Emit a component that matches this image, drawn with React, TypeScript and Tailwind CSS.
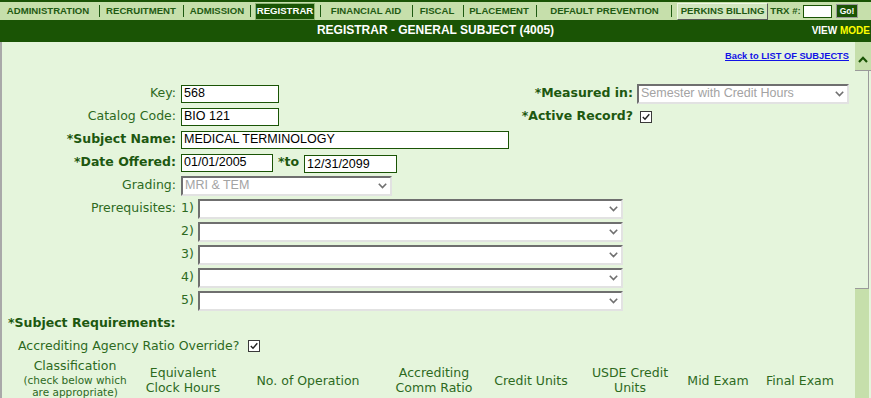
import React from "react";

function Chevron() {
  return (
    <svg width="9" height="6" viewBox="0 0 9 6" className="shrink-0">
      <path d="M0.8 0.8 L4.5 4.6 L8.2 0.8" fill="none" stroke="#707070" strokeWidth="1.6" />
    </svg>
  );
}

function Select({ w, value }: { w: string; value?: string }) {
  return (
    <div
      className={`flex h-[20px] ${w} items-center justify-between border-2 border-t-[#6f6f6f] border-l-[#6f6f6f] border-r-[#e2e2e2] border-b-[#e2e2e2] bg-white pl-[2px] pr-[3px] font-['Liberation_Sans',Arial,sans-serif] text-[12.5px] leading-none text-[#a3a3a3]`}
    >
      <span className="whitespace-nowrap">{value ?? ""}</span>
      <Chevron />
    </div>
  );
}

function TextBox({ w, value }: { w: string; value: string }) {
  return (
    <input
      readOnly
      defaultValue={value}
      className={`h-[18px] ${w} border border-[#1a5405] bg-white px-[2px] font-['Liberation_Sans',Arial,sans-serif] text-[12.5px] text-black outline-none`}
    />
  );
}

function Check() {
  return (
    <div className="flex h-[12px] w-[12px] items-center justify-center border border-[#3a3a3a] bg-white">
      <svg width="10" height="10" viewBox="0 0 10 10">
        <path d="M1.8 5 L4 7.3 L8.3 2.3" fill="none" stroke="#222" strokeWidth="1.4" />
      </svg>
    </div>
  );
}

function Sep({ w }: { w: string }) {
  return (
    <div className={`flex ${w} justify-center`}>
      <div className="h-[12px] w-px bg-[#1f5a12]" />
    </div>
  );
}

const label = "text-[12.5px] text-[#2d6a1e]";
const boldLabel = "text-[12.5px] font-bold text-[#1d5810]";

function Row({
  text,
  bold,
  children,
  right,
}: {
  text?: string;
  bold?: boolean;
  children?: React.ReactNode;
  right?: React.ReactNode;
}) {
  return (
    <div className="flex h-[23px] items-center">
      <div className={`w-[174px] whitespace-nowrap text-right ${bold ? boldLabel : label}`}>{text ?? ""}</div>
      <div className="ml-[5px] flex items-center">{children}</div>
      {right ? <div className="ml-auto flex items-center">{right}</div> : null}
    </div>
  );
}

function Prereq({ n, first }: { n: number; first?: boolean }) {
  return (
    <Row text={first ? "Prerequisites:" : ""}>
      <span className={`w-[13px] ${label}`}>{n})</span>
      <div className="ml-[4px]">
        <Select w="w-[425px]" />
      </div>
    </Row>
  );
}

export default function App() {
  return (
    <div className="h-[398px] w-[871px] overflow-hidden bg-[#e5f5dc] font-['DejaVu_Sans',sans-serif]">
      {/* top nav */}
      <div className="flex h-[20px] items-center border-t-2 border-t-[#1a5405] bg-[#c6dfab] font-['Liberation_Sans',Arial,sans-serif] text-[9.6px] font-bold text-[#1f5a12]">
        <div className="flex w-[96px] justify-center">ADMINISTRATION</div>
        <Sep w="w-[7px]" />
        <div className="flex w-[76px] justify-center">RECRUITMENT</div>
        <Sep w="w-[8px]" />
        <div className="flex w-[60px] justify-center">ADMISSION</div>
        <Sep w="w-[6px]" />
        <div className="ml-[2px] flex h-[17px] w-[60px] items-center justify-center border border-[#8fb875] bg-[#1a5405] text-white">
          REGISTRAR
        </div>
        <Sep w="w-[10px]" />
        <div className="flex w-[82px] justify-center">FINANCIAL AID</div>
        <Sep w="w-[10px]" />
        <div className="flex w-[40px] justify-center">FISCAL</div>
        <Sep w="w-[12px]" />
        <div className="flex w-[60px] justify-center">PLACEMENT</div>
        <Sep w="w-[14px]" />
        <div className="flex w-[123px] justify-center">DEFAULT PREVENTION</div>
        <Sep w="w-[11px]" />
        <div className="flex h-[17px] w-[91px] items-center justify-center border border-t-[#eef6e6] border-l-[#eef6e6] border-r-[#5a5a5a] border-b-[#5a5a5a] bg-[#d2e6bf]">
          PERKINS BILLING
        </div>
        <div className="flex w-[35px] justify-center">TRX #:</div>
        <div className="h-[13px] w-[29px] border border-[#1a5405] bg-white" />
        <div className="ml-[4px] flex h-[14px] w-[22px] items-center justify-center border border-[#9a9a9a] bg-[#1a5405] text-[8.5px] text-white">
          Go!
        </div>
      </div>

      {/* header */}
      <div className="grid h-[22px] grid-cols-[1fr_auto_1fr] items-end bg-[#1a5405] pb-[5px] font-['Liberation_Sans',Arial,sans-serif] font-bold">
        <div />
        <div className="whitespace-nowrap text-[12px] leading-[14px] text-white">REGISTRAR - GENERAL SUBJECT (4005)</div>
        <div className="flex justify-end whitespace-nowrap pr-[1px] text-[10px] leading-[12px]">
          <span className="text-white">VIEW&nbsp;</span>
          <span className="text-[#ffff00]">MODE</span>
        </div>
      </div>

      {/* content */}
      <div className="flex h-[356px]">
        <div className="flex-1 border-l-2 border-l-[#a9a9a9] pr-[6px]">
          <div className="flex justify-end pt-[8px]">
            <span className="font-['Liberation_Sans',Arial,sans-serif] text-[9.3px] font-bold leading-[12px] text-[#1212e6] underline">
              Back to LIST OF SUBJECTS
            </span>
          </div>

          <div className="mt-[20px]">
            <Row
              text="Key:"
              right={
                <>
                  <span className={boldLabel}>*Measured in:</span>
                  <div className="ml-[4px]">
                    <Select w="w-[212px]" value="Semester with Credit Hours" />
                  </div>
                </>
              }
            >
              <TextBox w="w-[98px]" value="568" />
            </Row>
            <Row
              text="Catalog Code:"
              right={
                <>
                  <span className={boldLabel}>*Active Record?</span>
                  <div className="ml-[4px] w-[212px] pl-[3px]">
                    <Check />
                  </div>
                </>
              }
            >
              <TextBox w="w-[98px]" value="BIO 121" />
            </Row>
            <Row text="*Subject Name:" bold>
              <TextBox w="w-[328px]" value="MEDICAL TERMINOLOGY" />
            </Row>
            <Row text="*Date Offered:" bold>
              <TextBox w="w-[92px]" value="01/01/2005" />
              <span className={`ml-[5px] ${boldLabel}`}>*to</span>
              <div className="ml-[5px]">
                <TextBox w="w-[93px]" value="12/31/2099" />
              </div>
            </Row>
            <Row text="Grading:">
              <Select w="w-[211px]" value="MRI & TEM" />
            </Row>
            <Prereq n={1} first />
            <Prereq n={2} />
            <Prereq n={3} />
            <Prereq n={4} />
            <Prereq n={5} />
          </div>

          <div className={`ml-[6px] mt-[1px] flex h-[20px] items-center ${boldLabel}`}>*Subject Requirements:</div>
          <div className={`ml-[16px] mt-[3px] flex h-[20px] items-center ${label}`}>
            <span>Accrediting Agency Ratio Override?</span>
            <div className="ml-[9px]">
              <Check />
            </div>
          </div>

          <div className={`ml-[16px] mt-[1px] flex h-[46px] items-center text-center ${label}`}>
            <div className="w-[114px] self-start">
              <div className="leading-[17px]">Classification</div>
              <div className="text-[10.5px] leading-[12px]">
                (check below which
                <br />
                are appropriate)
              </div>
            </div>
            <div className="w-[102px] leading-[15px]">
              Equivalent
              <br />
              Clock Hours
            </div>
            <div className="w-[148px] leading-[15px]">No. of Operation</div>
            <div className="w-[104px] leading-[15px]">
              Accrediting
              <br />
              Comm Ratio
            </div>
            <div className="w-[90px] leading-[15px]">Credit Units</div>
            <div className="w-[108px] leading-[15px]">
              USDE Credit
              <br />
              Units
            </div>
            <div className="w-[68px] whitespace-nowrap leading-[15px]">Mid Exam</div>
            <div className="w-[96px] whitespace-nowrap leading-[15px]">Final Exam</div>
          </div>
        </div>

        {/* scrollbar */}
        <div className="flex w-[16px] flex-col">
          <div className="flex h-[29px] justify-center border-b border-b-[#9a9a9a] bg-[#c6dfab] pt-[14px]">
            <svg width="10" height="7" viewBox="0 0 10 7">
              <path d="M1 6 L5 1.8 L9 6" fill="none" stroke="#1a5405" strokeWidth="2.2" />
            </svg>
          </div>
          <div className="mr-[2px] h-[217px] border-r border-r-[#9a9a9a]" />
          <div className="mr-[2px] flex-1 border-t border-t-[#9a9a9a] bg-[#c6dfab]" />
        </div>
      </div>
    </div>
  );
}
